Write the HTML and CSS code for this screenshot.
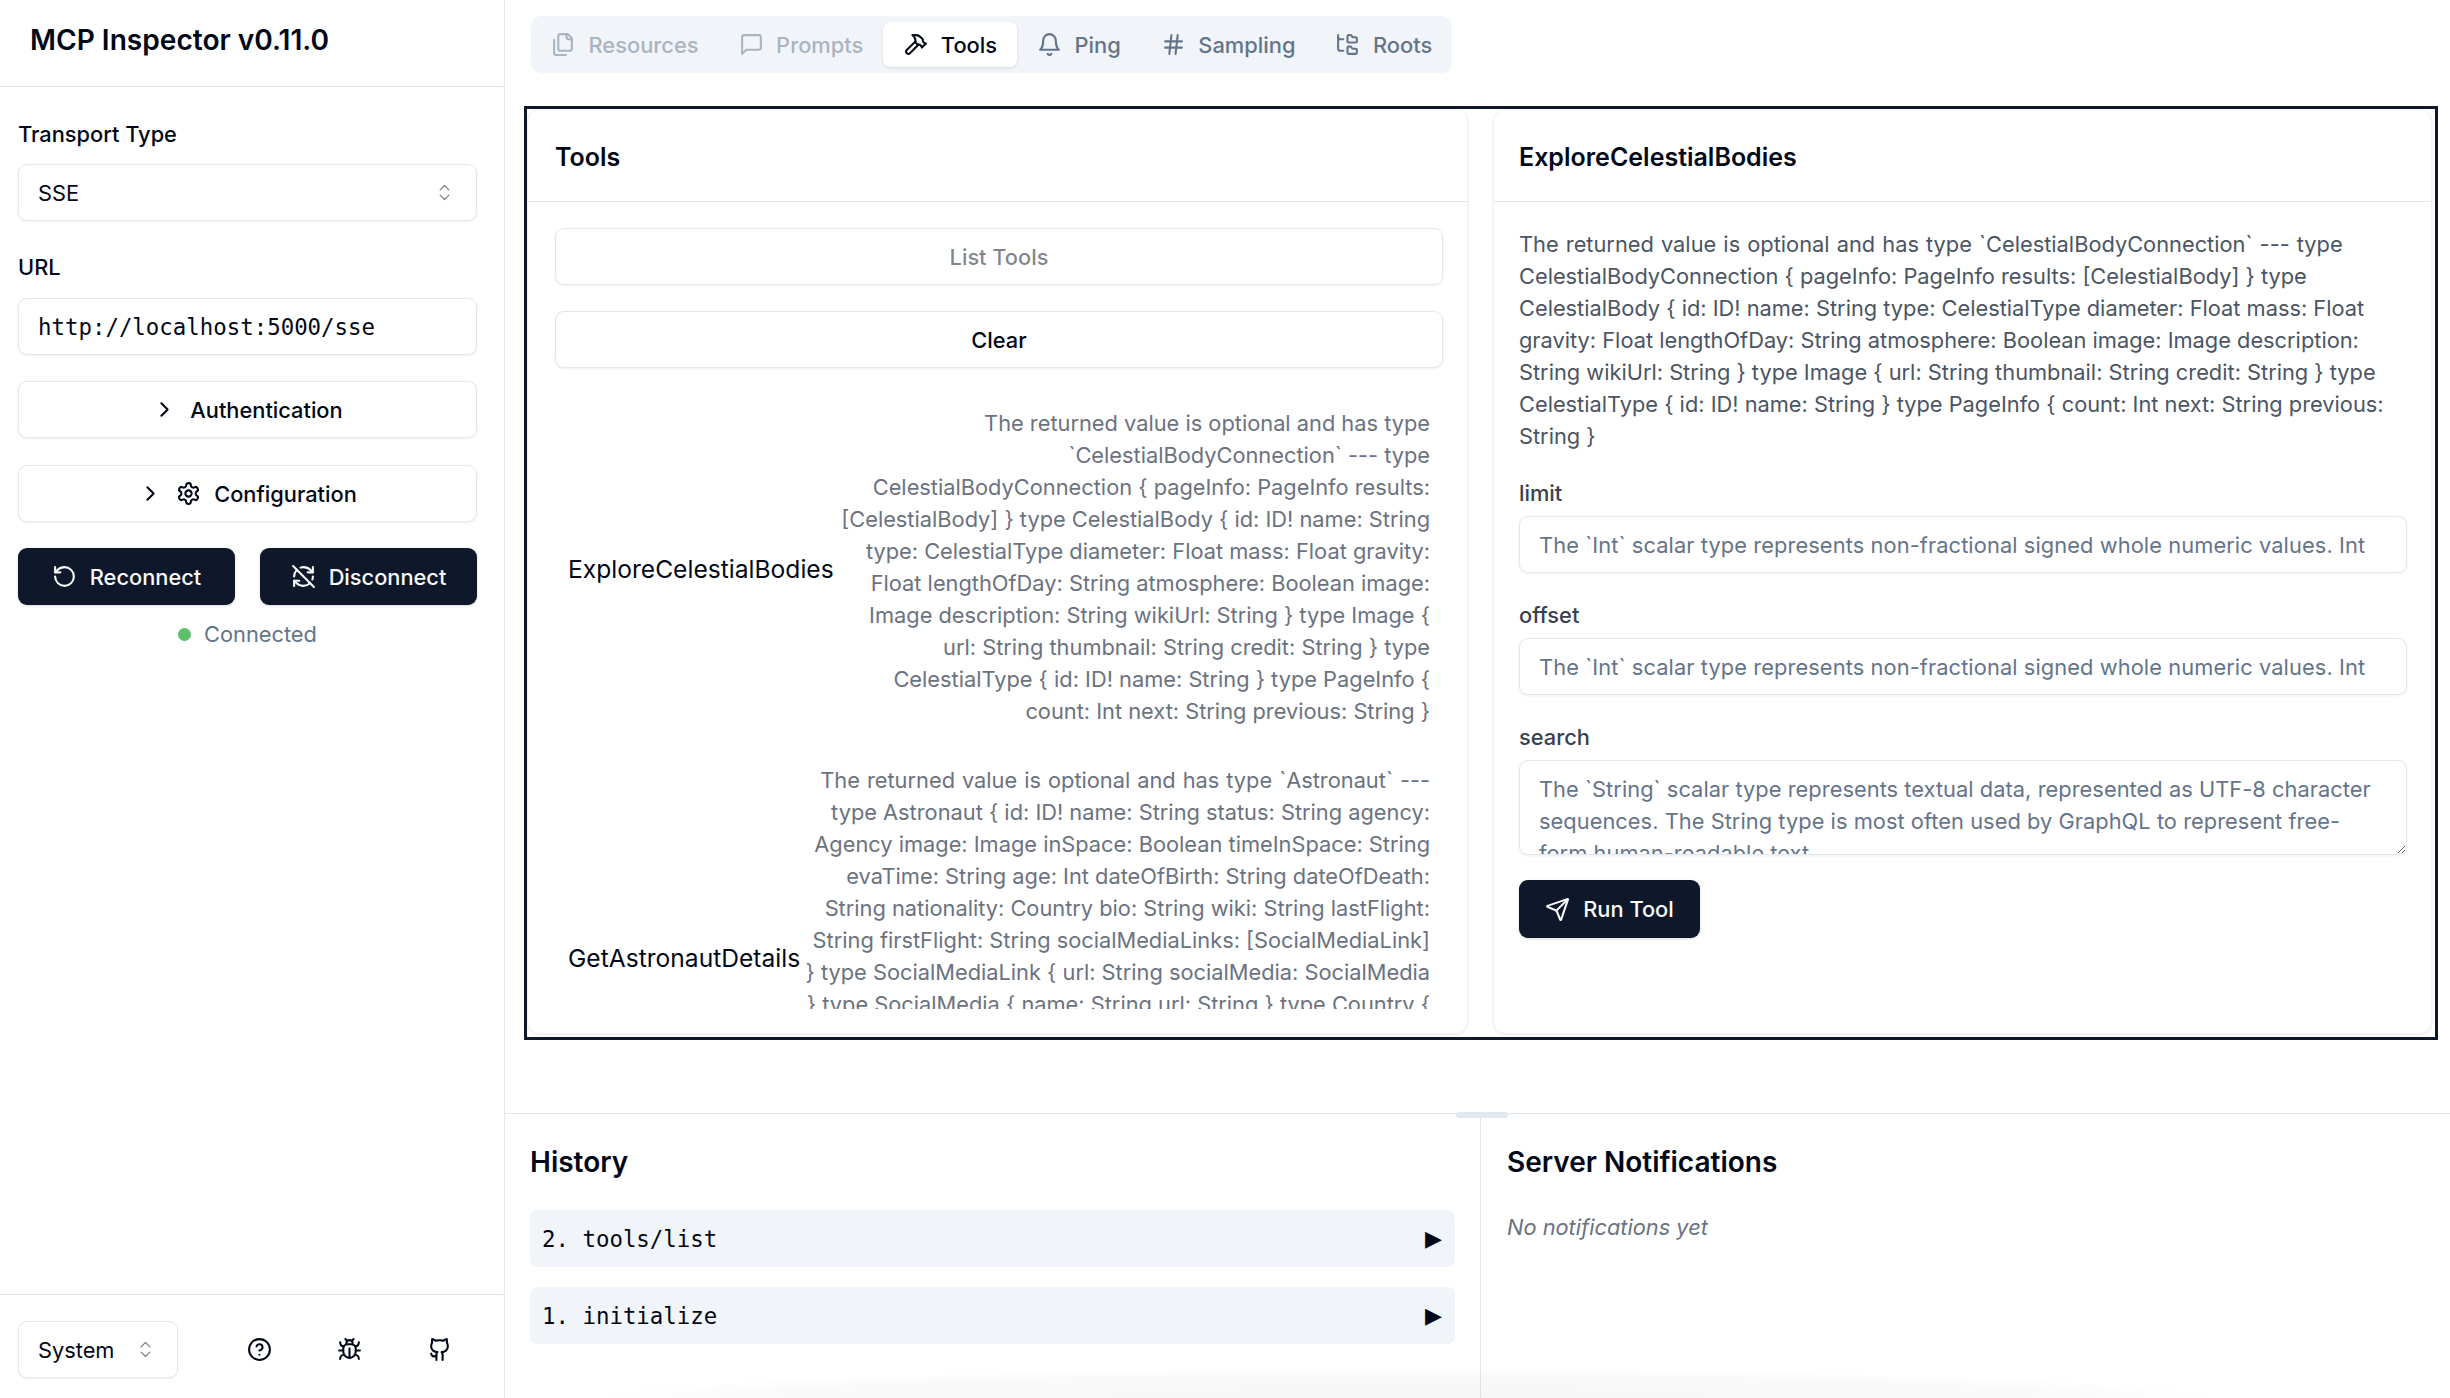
FILE: index.html
```html
<!DOCTYPE html>
<html lang="en">
<head>
  <meta charset="UTF-8">
  <title>MCP Inspector</title>
  <link rel="stylesheet" href="styles.css">
</head>
<body>
  <svg class="sprite" xmlns="http://www.w3.org/2000/svg">
    <symbol id="i-files" viewBox="0 0 24 24"><path d="M20 7h-3a2 2 0 0 1-2-2V2"/><path d="M9 18a2 2 0 0 1-2-2V4a2 2 0 0 1 2-2h7l4 4v10a2 2 0 0 1-2 2Z"/><path d="M3 7.6v12.8A1.6 1.6 0 0 0 4.6 22h9.8"/></symbol>
    <symbol id="i-message" viewBox="0 0 24 24"><path d="M21 15a2 2 0 0 1-2 2H7l-4 4V5a2 2 0 0 1 2-2h14a2 2 0 0 1 2 2z"/></symbol>
    <symbol id="i-hammer" viewBox="0 0 24 24"><path d="m15 12-8.373 8.373a1 1 0 1 1-3-3L12 9"/><path d="m18 15 4-4"/><path d="m21.5 11.5-1.914-1.914A2 2 0 0 1 19 8.172V7l-2.26-2.26a6 6 0 0 0-4.202-1.756L9 2.96l.92.82A6.18 6.18 0 0 1 12 8.4V10l2 2h1.172a2 2 0 0 1 1.414.586L18.5 14.5"/></symbol>
    <symbol id="i-bell" viewBox="0 0 24 24"><path d="M6 8a6 6 0 0 1 12 0c0 7 3 9 3 9H3s3-2 3-9"/><path d="M10.3 21a1.94 1.94 0 0 0 3.4 0"/></symbol>
    <symbol id="i-hash" viewBox="0 0 24 24"><path d="M4 9h16"/><path d="M4 15h16"/><path d="M10 3 8 21"/><path d="M16 3l-2 18"/></symbol>
    <symbol id="i-tree" viewBox="0 0 24 24"><path d="M20 10a1 1 0 0 0 1-1V6a1 1 0 0 0-1-1h-2.5a1 1 0 0 1-.8-.4l-.9-1.2A1 1 0 0 0 15 3h-2a1 1 0 0 0-1 1v5a1 1 0 0 0 1 1Z"/><path d="M20 21a1 1 0 0 0 1-1v-3a1 1 0 0 0-1-1h-2.9a1 1 0 0 1-.88-.55l-.42-.85a1 1 0 0 0-.92-.6H13a1 1 0 0 0-1 1v5a1 1 0 0 0 1 1Z"/><path d="M3 5a2 2 0 0 0 2 2h3"/><path d="M3 3v13a2 2 0 0 0 2 2h3"/></symbol>
    <symbol id="i-updown" viewBox="0 0 24 24"><path d="m7 15 5 5 5-5"/><path d="m7 9 5-5 5 5"/></symbol>
    <symbol id="i-right" viewBox="0 0 24 24"><path d="m9 18 6-6-6-6"/></symbol>
    <symbol id="i-settings" viewBox="0 0 24 24"><path d="M12.22 2h-.44a2 2 0 0 0-2 2v.18a2 2 0 0 1-1 1.73l-.43.25a2 2 0 0 1-2 0l-.15-.08a2 2 0 0 0-2.73.73l-.22.38a2 2 0 0 0 .73 2.73l.15.1a2 2 0 0 1 1 1.72v.51a2 2 0 0 1-1 1.74l-.15.09a2 2 0 0 0-.73 2.73l.22.38a2 2 0 0 0 2.73.73l.15-.08a2 2 0 0 1 2 0l.43.25a2 2 0 0 1 1 1.73V20a2 2 0 0 0 2 2h.44a2 2 0 0 0 2-2v-.18a2 2 0 0 1 1-1.73l.43-.25a2 2 0 0 1 2 0l.15.08a2 2 0 0 0 2.73-.73l.22-.39a2 2 0 0 0-.73-2.73l-.15-.08a2 2 0 0 1-1-1.74v-.5a2 2 0 0 1 1-1.74l.15-.09a2 2 0 0 0 .73-2.73l-.22-.38a2 2 0 0 0-2.73-.73l-.15.08a2 2 0 0 1-2 0l-.43-.25a2 2 0 0 1-1-1.73V4a2 2 0 0 0-2-2z"/><circle cx="12" cy="12" r="3"/></symbol>
    <symbol id="i-rotate" viewBox="0 0 24 24"><path d="M3 12a9 9 0 1 0 9-9 9.75 9.75 0 0 0-6.74 2.74L3 8"/><path d="M3 3v5h5"/></symbol>
    <symbol id="i-refresh-off" viewBox="0 0 24 24"><path d="M21 8L18.74 5.74A9.75 9.75 0 0 0 12 3C11 3 10.03 3.16 9.13 3.47"/><path d="M8 16H3v5"/><path d="M3 12C3 9.51 4 7.26 5.64 5.64"/><path d="m3 16 2.26 2.26A9.75 9.75 0 0 0 12 21c2.49 0 4.74-1 6.36-2.64"/><path d="M21 12c0 1-.16 1.97-.47 2.87"/><path d="M21 3v5h-5"/><path d="M22 22 2 2"/></symbol>
    <symbol id="i-send" viewBox="0 0 24 24"><path d="M14.536 21.686a.5.5 0 0 0 .937-.024l6.5-19a.496.496 0 0 0-.635-.635l-19 6.5a.5.5 0 0 0-.024.937l7.93 3.18a2 2 0 0 1 1.112 1.11z"/><path d="m21.854 2.147-10.94 10.939"/></symbol>
    <symbol id="i-help" viewBox="0 0 24 24"><circle cx="12" cy="12" r="10"/><path d="M9.09 9a3 3 0 0 1 5.83 1c0 2-3 3-3 3"/><path d="M12 17h.01"/></symbol>
    <symbol id="i-bug" viewBox="0 0 24 24"><path d="m8 2 1.88 1.88"/><path d="M14.12 3.88 16 2"/><path d="M9 7.13v-1a3.003 3.003 0 1 1 6 0v1"/><path d="M12 20c-3.3 0-6-2.7-6-6v-3a4 4 0 0 1 4-4h4a4 4 0 0 1 4 4v3c0 3.3-2.7 6-6 6"/><path d="M12 20v-9"/><path d="M6.53 9C4.6 8.8 3 7.1 3 5"/><path d="M6 13H2"/><path d="M3 21c0-2.1 1.7-3.9 3.8-4"/><path d="M20.97 5c0 2.1-1.6 3.8-3.5 4"/><path d="M22 13h-4"/><path d="M17.2 17c2.1.1 3.8 1.9 3.8 4"/></symbol>
    <symbol id="i-github" viewBox="0 0 24 24"><path d="M15 22v-4a4.8 4.8 0 0 0-1-3.5c3 0 6-2 6-5.5.08-1.25-.27-2.48-1-3.5.28-1.15.28-2.35 0-3.5 0 0-1 0-3 1.5-2.64-.5-5.36-.5-8 0C6 2 5 2 5 2c-.3 1.15-.3 2.35 0 3.5A5.403 5.403 0 0 0 4 9c0 3.5 3 5.5 6 5.5-.39.49-.68 1.05-.85 1.65-.17.6-.22 1.23-.15 1.85v4"/><path d="M9 18c-4.51 2-5-2-5-2"/></symbol>
  </svg>

  <aside class="sidebar">
    <div class="sidebar-head"><h1>MCP Inspector v0.11.0</h1></div>

    <div class="sidebar-body">
      <label class="side-label">Transport Type</label>
      <div class="control select"><span>SSE</span><svg class="icon updown"><use href="#i-updown"/></svg></div>

      <label class="side-label url-label">URL</label>
      <input class="control mono" type="text" value="http://localhost:5000/sse">

      <button class="btn outline side-btn"><svg class="icon"><use href="#i-right"/></svg>Authentication</button>
      <button class="btn outline side-btn"><svg class="icon"><use href="#i-right"/></svg><svg class="icon"><use href="#i-settings"/></svg>Configuration</button>

      <div class="connect-row">
        <button class="btn dark"><svg class="icon"><use href="#i-rotate"/></svg>Reconnect</button>
        <button class="btn dark"><svg class="icon"><use href="#i-refresh-off"/></svg>Disconnect</button>
      </div>
      <div class="status"><span class="dot"></span>Connected</div>
    </div>

    <div class="sidebar-foot">
      <div class="control select theme"><span>System</span><svg class="icon updown"><use href="#i-updown"/></svg></div>
      <svg class="icon foot-icon"><use href="#i-help"/></svg>
      <svg class="icon foot-icon"><use href="#i-bug"/></svg>
      <svg class="icon foot-icon"><use href="#i-github"/></svg>
    </div>
  </aside>

  <main class="main">
    <nav class="tabs">
      <div class="tab disabled"><svg class="icon"><use href="#i-files"/></svg>Resources</div>
      <div class="tab disabled"><svg class="icon"><use href="#i-message"/></svg>Prompts</div>
      <div class="tab active"><svg class="icon"><use href="#i-hammer"/></svg>Tools</div>
      <div class="tab"><svg class="icon"><use href="#i-bell"/></svg>Ping</div>
      <div class="tab"><svg class="icon"><use href="#i-hash"/></svg>Sampling</div>
      <div class="tab"><svg class="icon"><use href="#i-tree"/></svg>Roots</div>
    </nav>

    <section class="panel">
      <div class="card">
        <h3 class="card-title">Tools</h3>
        <div class="card-body list-body">
          <button class="btn outline wide faded">List Tools</button>
          <button class="btn outline wide">Clear</button>
          <div class="tool-list">
            <div class="tool-row">
              <span class="tool-name">ExploreCelestialBodies</span>
              <span class="tool-desc">The returned value is optional and has type `CelestialBodyConnection` --- type CelestialBodyConnection { pageInfo: PageInfo results: [CelestialBody] } type CelestialBody { id: ID! name: String type: CelestialType diameter: Float mass: Float gravity: Float lengthOfDay: String atmosphere: Boolean image: Image description: String wikiUrl: String } type Image { url: String thumbnail: String credit: String } type CelestialType { id: ID! name: String } type PageInfo { count: Int next: String previous: String }</span>
            </div>
            <div class="tool-row">
              <span class="tool-name">GetAstronautDetails</span>
              <span class="tool-desc">The returned value is optional and has type `Astronaut` --- type Astronaut { id: ID! name: String status: String agency: Agency image: Image inSpace: Boolean timeInSpace: String evaTime: String age: Int dateOfBirth: String dateOfDeath: String nationality: Country bio: String wiki: String lastFlight: String firstFlight: String socialMediaLinks: [SocialMediaLink] } type SocialMediaLink { url: String socialMedia: SocialMedia } type SocialMedia { name: String url: String } type Country { id: ID! name: String alpha_2_code: String } type Image { url: String thumbnail: String credit: String } type Agency { id: ID! name: String abbrev: String country: Country description: String founded: String }</span>
            </div>
          </div>
        </div>
      </div>

      <div class="card">
        <h3 class="card-title">ExploreCelestialBodies</h3>
        <div class="card-body detail-body">
          <p class="detail-desc">The returned value is optional and has type `CelestialBodyConnection` --- type CelestialBodyConnection { pageInfo: PageInfo results: [CelestialBody] } type CelestialBody { id: ID! name: String type: CelestialType diameter: Float mass: Float gravity: Float lengthOfDay: String atmosphere: Boolean image: Image description: String wikiUrl: String } type Image { url: String thumbnail: String credit: String } type CelestialType { id: ID! name: String } type PageInfo { count: Int next: String previous: String }</p>
          <div class="field">
            <label>limit</label>
            <input class="control spaced" type="text" placeholder="The `Int` scalar type represents non-fractional signed whole numeric values. Int">
          </div>
          <div class="field">
            <label>offset</label>
            <input class="control spaced" type="text" placeholder="The `Int` scalar type represents non-fractional signed whole numeric values. Int">
          </div>
          <div class="field last-field">
            <label>search</label>
            <textarea class="control area" placeholder="The `String` scalar type represents textual data, represented as UTF-8 character sequences. The String type is most often used by GraphQL to represent free-form human-readable text."></textarea>
          </div>
          <button class="btn dark run"><svg class="icon"><use href="#i-send"/></svg>Run Tool</button>
        </div>
      </div>
    </section>

    <section class="bottom">
      <span class="drag-handle"></span>
      <div class="history">
        <h2>History</h2>
        <div class="history-item"><span>2. tools/list</span><span class="arrow">▶</span></div>
        <div class="history-item"><span>1. initialize</span><span class="arrow">▶</span></div>
      </div>
      <div class="notifications">
        <h2>Server Notifications</h2>
        <p>No notifications yet</p>
      </div>
      <span class="bottom-fade"></span>
    </section>
  </main>
</body>
</html>
```

FILE: styles.css
```css
* { box-sizing: border-box; }

html, body {
  height: 100%;
}

body {
  margin: 0;
  display: flex;
  height: 1398px;
  overflow: hidden;
  background: #fff;
  color: #020817;
  font-family: Inter, "Liberation Sans", sans-serif;
  font-size: 21.8px;
  line-height: 32px;
}

h1, h2, h3, p { margin: 0; }

.sprite { display: none; }

.icon {
  width: 25px;
  height: 25px;
  flex-shrink: 0;
  fill: none;
  stroke: currentColor;
  stroke-width: 2;
  stroke-linecap: round;
  stroke-linejoin: round;
}

/* sidebar */
.sidebar {
  width: 505px;
  flex-shrink: 0;
  display: flex;
  flex-direction: column;
  border-right: 1px solid #e2e8f0;
}

.sidebar-head {
  height: 87px;
  padding: 0 30px;
  display: flex;
  align-items: center;
  border-bottom: 1px solid #e2e8f0;
}

.sidebar-head h1 {
  font-size: 28.125px;
  font-weight: 600;
  line-height: 40px;
  margin-top: -6px;
}

.sidebar-body {
  flex: 1;
  padding: 31px 27px 0 18px;
  display: flex;
  flex-direction: column;
}

.side-label {
  font-weight: 500;
  margin-bottom: 14px;
}

.url-label {
  margin-top: 30px;
  margin-bottom: 15px;
}

.control {
  width: 100%;
  height: 57px;
  padding: 0 19px;
  background: #fff;
  border: 1px solid #e2e8f0;
  border-radius: 9px;
  box-shadow: 0 1px 3px rgba(0, 0, 0, 0.07);
  color: #020817;
  font: inherit;
  outline: none;
}

.control::placeholder { color: #64748b; opacity: 1; }

.spaced { letter-spacing: 0.1px; }

.mono {
  font-family: "DejaVu Sans Mono", monospace;
  font-size: 22.4px;
}

.select {
  display: flex;
  align-items: center;
  justify-content: space-between;
  padding-right: 21px;
}

.updown {
  width: 21px;
  height: 21px;
  stroke-width: 1.5;
  opacity: 0.5;
}

.btn {
  display: flex;
  align-items: center;
  justify-content: center;
  gap: 13px;
  height: 57px;
  padding: 0 25px;
  border-radius: 9px;
  font: inherit;
  font-weight: 500;
  cursor: pointer;
}

.outline {
  background: #fff;
  color: #020817;
  border: 1px solid #e2e8f0;
  box-shadow: 0 1px 3px rgba(0, 0, 0, 0.07);
}

.dark {
  background: #0f172a;
  color: #f8fafc;
  border: none;
  box-shadow: 0 1px 3px rgba(0, 0, 0, 0.15);
}

.side-btn { width: 100%; margin-top: 26px; }
.side-btn + .side-btn { margin-top: 27px; }

.connect-row {
  display: grid;
  grid-template-columns: 1fr 1fr;
  gap: 25px;
  margin-top: 26px;
}

.connect-row .btn { padding: 0; }

.status {
  display: flex;
  align-items: center;
  justify-content: center;
  gap: 13px;
  margin-top: 13px;
  color: #64748b;
}

.dot {
  width: 13px;
  height: 13px;
  border-radius: 50%;
  background: #5cbf6a;
}

.sidebar-foot {
  height: 104px;
  padding: 6px 0 0 18px;
  border-top: 1px solid #e2e8f0;
  display: flex;
  align-items: center;
  gap: 65px;
}

.theme {
  width: 160px;
  padding: 0 21px 0 19px;
  margin-right: 4px;
}

/* main column */
.main {
  flex: 1;
  min-width: 0;
  display: flex;
  flex-direction: column;
}

.tabs {
  display: flex;
  align-self: flex-start;
  align-items: center;
  width: 921px;
  height: 57px;
  margin: 16px 0 33px 26px;
  padding: 6px 0;
  background: #f1f5f9;
  border-radius: 10px;
  color: #64748b;
  font-size: 21.875px;
  font-weight: 500;
}

.tab {
  display: flex;
  align-items: center;
  gap: 12.5px;
  height: 45px;
  padding: 0 20px;
  border-radius: 7px;
}

.tab.disabled { opacity: 0.5; }

.tab.active {
  background: #fff;
  color: #020817;
  box-shadow: 0 1px 3px rgba(0, 0, 0, 0.12);
}

.panel {
  display: grid;
  grid-template-columns: 941px 1fr;
  grid-template-rows: minmax(0, 1fr);
  gap: 25px;
  height: 934px;
  margin: 0 12px 0 19px;
  padding: 0 3px 3px 0;
  border: 3px solid #0f172a;
}

.card {
  min-width: 0;
  min-height: 0;
  display: flex;
  flex-direction: column;
  border: 1px solid #eef1f5;
  border-top-color: #f6f7f9;
  border-radius: 13px;
  box-shadow: 0 1px 3px rgba(0, 0, 0, 0.08);
}

.card-title {
  height: 92px;
  padding: 2px 27px 0;
  display: flex;
  align-items: center;
  border-bottom: 1px solid #e2e8f0;
  font-size: 25px;
  font-weight: 600;
}

.card:last-child .card-title { padding-left: 25px; }

.card-body { flex: 1; min-height: 0; }

.list-body {
  padding: 26px 24px 24px 27px;
  display: flex;
  flex-direction: column;
  gap: 26px;
}

.wide { width: 100%; flex-shrink: 0; }

.faded { color: rgba(2, 8, 23, 0.5); }

.tool-list {
  flex: 1;
  min-height: 0;
  overflow: hidden;
  padding-top: 1px;
}

.tool-row {
  display: flex;
  align-items: center;
  padding: 12px 13px;
  margin-bottom: 13px;
}

.tool-name {
  flex-shrink: 0;
  font-size: 24.6px;
  padding-top: 3px;
}

.tool-desc {
  flex: 1;
  text-align: right;
  color: #6b7280;
}

.tool-row + .tool-row .tool-desc::first-line { word-spacing: 0.85px; }
.detail-desc::first-line { word-spacing: 1px; }

.detail-body { padding: 26px 24px 0 25px; }

.detail-desc {
  color: #4b5563;
  margin-bottom: 25px;
}

.field { margin-bottom: 26px; }
.last-field { margin-bottom: 25px; }

.field label {
  display: block;
  margin-bottom: 7px;
  color: #374151;
  font-weight: 500;
}

.area {
  display: block;
  height: 95px;
  padding: 12px 19px;
  letter-spacing: 0.05px;
  resize: vertical;
  overflow: hidden;
}

.run {
  width: 181px;
  height: 58px;
  padding: 0;
}

/* bottom panel */
.bottom {
  position: relative;
  flex: 1;
  display: flex;
  margin-top: 73px;
  border-top: 1px solid #e2e8f0;
}

.drag-handle {
  position: absolute;
  top: -2px;
  left: 951px;
  width: 52px;
  height: 6px;
  border-radius: 3px;
  background: #e2e8f0;
}

.bottom h2 {
  font-size: 28px;
  font-weight: 600;
  line-height: 40px;
}

.history {
  width: 976px;
  padding: 28px 25px 0 25px;
  border-right: 1px solid #e2e8f0;
}

.history h2 { margin-bottom: 28px; }

.history-item {
  display: flex;
  align-items: center;
  justify-content: space-between;
  height: 57px;
  margin-bottom: 20px;
  padding: 0 13px 0 12px;
  background: #f1f5f9;
  border-radius: 7px;
  font-family: "DejaVu Sans Mono", monospace;
  font-size: 22.4px;
}

.arrow { font-family: "DejaVu Sans", sans-serif; font-size: 22px; }

.notifications { padding: 28px 26px 0 26px; }

.notifications p {
  margin-top: 29px;
  color: #6b7280;
  font-style: italic;
}

.bottom-fade {
  position: absolute;
  left: 80px;
  bottom: 0;
  width: 1645px;
  height: 30px;
  background: radial-gradient(50% 100% at 50% 100%, rgba(0, 0, 0, 0.035), rgba(0, 0, 0, 0.025) 75%, transparent);
  pointer-events: none;
}
```
